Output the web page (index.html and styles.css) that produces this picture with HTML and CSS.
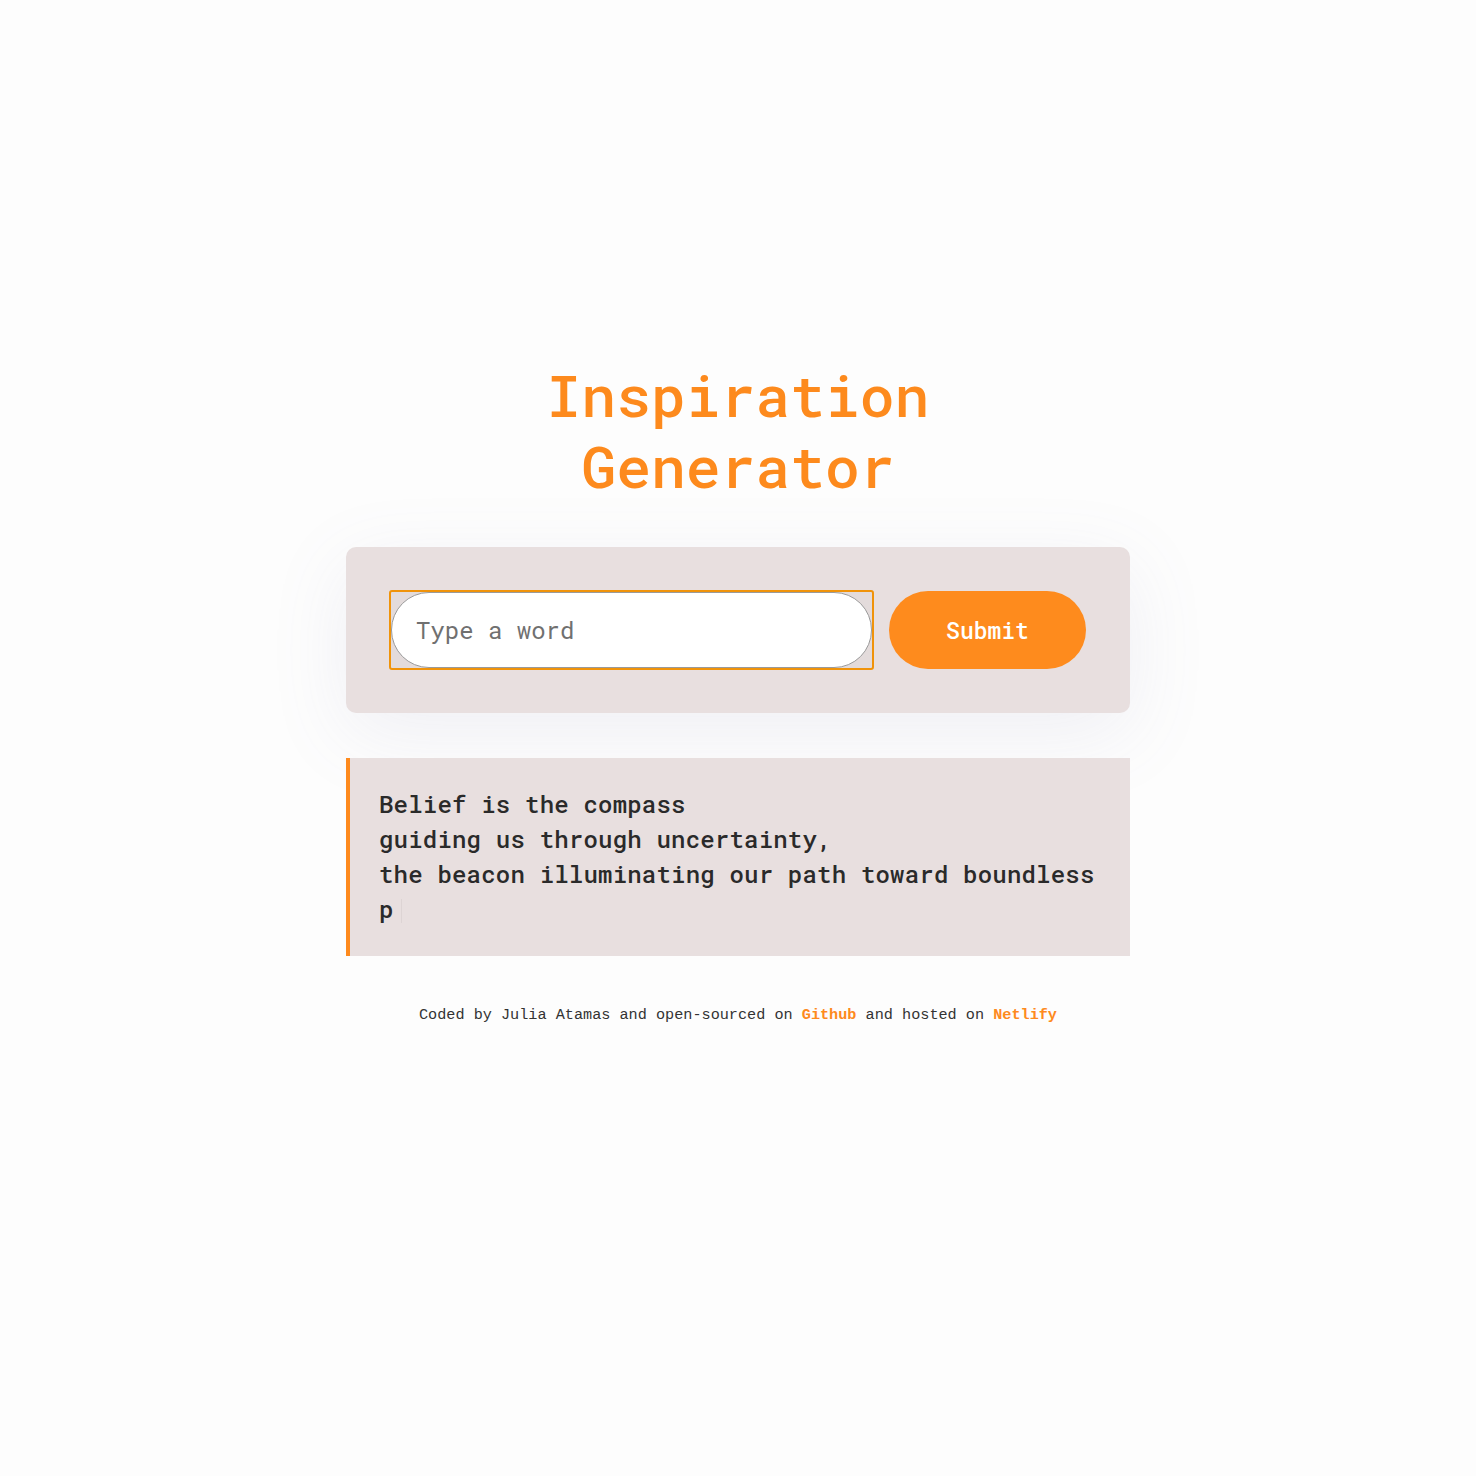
FILE: index.html
```html
<!DOCTYPE html>
<html lang="en">
<head>
<meta charset="utf-8">
<title>Inspiration Generator</title>
<link rel="stylesheet" href="styles.css">
</head>
<body>
<div class="container">
  <h1 class="title">Inspiration Generator</h1>
  <form class="search-form">
    <span class="input-wrap"><input class="word-input" type="text" placeholder="Type a word"></span>
    <button class="submit-btn" type="button">Submit</button>
  </form>
  <div class="poem">Belief is the compass<br>guiding us through uncertainty,<br>the beacon illuminating our path toward boundless<br>p<span class="cursor"></span></div>
  <footer class="footer">Coded by Julia Atamas and open-sourced on <a href="#">Github</a> and hosted on <a href="#">Netlify</a></footer>
</div>
</body>
</html>
```
FILE: styles.css
```css
html, body {
  margin: 0;
  padding: 0;
  background: #fdfdfd;
}
body {
  font-family: "Roboto Mono", "DejaVu Sans Mono", monospace;
}
.container {
  width: 784px;
  margin: 0 auto;
  padding-top: 359px;
}
.title {
  margin: 0 auto 46px;
  max-width: 520px;
  text-align: center;
  color: #fd8a1d;
  font-size: 58px;
  line-height: 71px;
  font-weight: 500;
}
.search-form {
  display: flex;
  align-items: center;
  gap: 15px;
  padding: 44px;
  background: #e8dfdf;
  border-radius: 10px;
  box-shadow: 0 20px 80px rgba(120, 120, 170, 0.10);
  margin: 0;
}
.input-wrap {
  flex: 1;
  display: block;
  height: 80px;
  margin: -1px 0 -1px -1px;
  box-sizing: border-box;
  border: 2px solid #f0930a;
  border-radius: 3px;
  background: #e3dbdb;
}
.word-input {
  display: block;
  width: 100%;
  height: 100%;
  box-sizing: border-box;
  border: 1px solid #9a9a9a;
  border-radius: 40px;
  background: #fff;
  padding: 0 0 0 24px;
  font-family: "Roboto Mono", "DejaVu Sans Mono", monospace;
  font-size: 24px;
  color: #222;
  outline: none;
}
.word-input::placeholder {
  color: #707070;
}
.submit-btn {
  flex: none;
  width: 197px;
  height: 78px;
  border: none;
  border-radius: 40px;
  background: #fe8b1d;
  color: #fff;
  font-family: "Roboto Mono", "DejaVu Sans Mono", monospace;
  font-size: 23px;
  font-weight: 500;
}
.poem {
  margin-top: 45px;
  border-left: 4px solid #fe8a1d;
  background: #e8dfdf;
  padding: 29px 30px 29px 29px;
  font-size: 24px;
  line-height: 35px;
  letter-spacing: 0.2px;
  color: #2a2a2a;
  font-weight: 500;
}
.cursor {
  display: inline-block;
  width: 1px;
  height: 24px;
  margin-left: 7px;
  vertical-align: -5px;
  background: #ddd4d4;
}
.footer {
  margin-top: 49px;
  text-align: center;
  font-family: "Liberation Mono", monospace;
  font-size: 15.2px;
  line-height: 20px;
  color: #333;
  white-space: nowrap;
}
.footer a {
  color: #fe8a1d;
  font-weight: bold;
  text-decoration: none;
}
```
